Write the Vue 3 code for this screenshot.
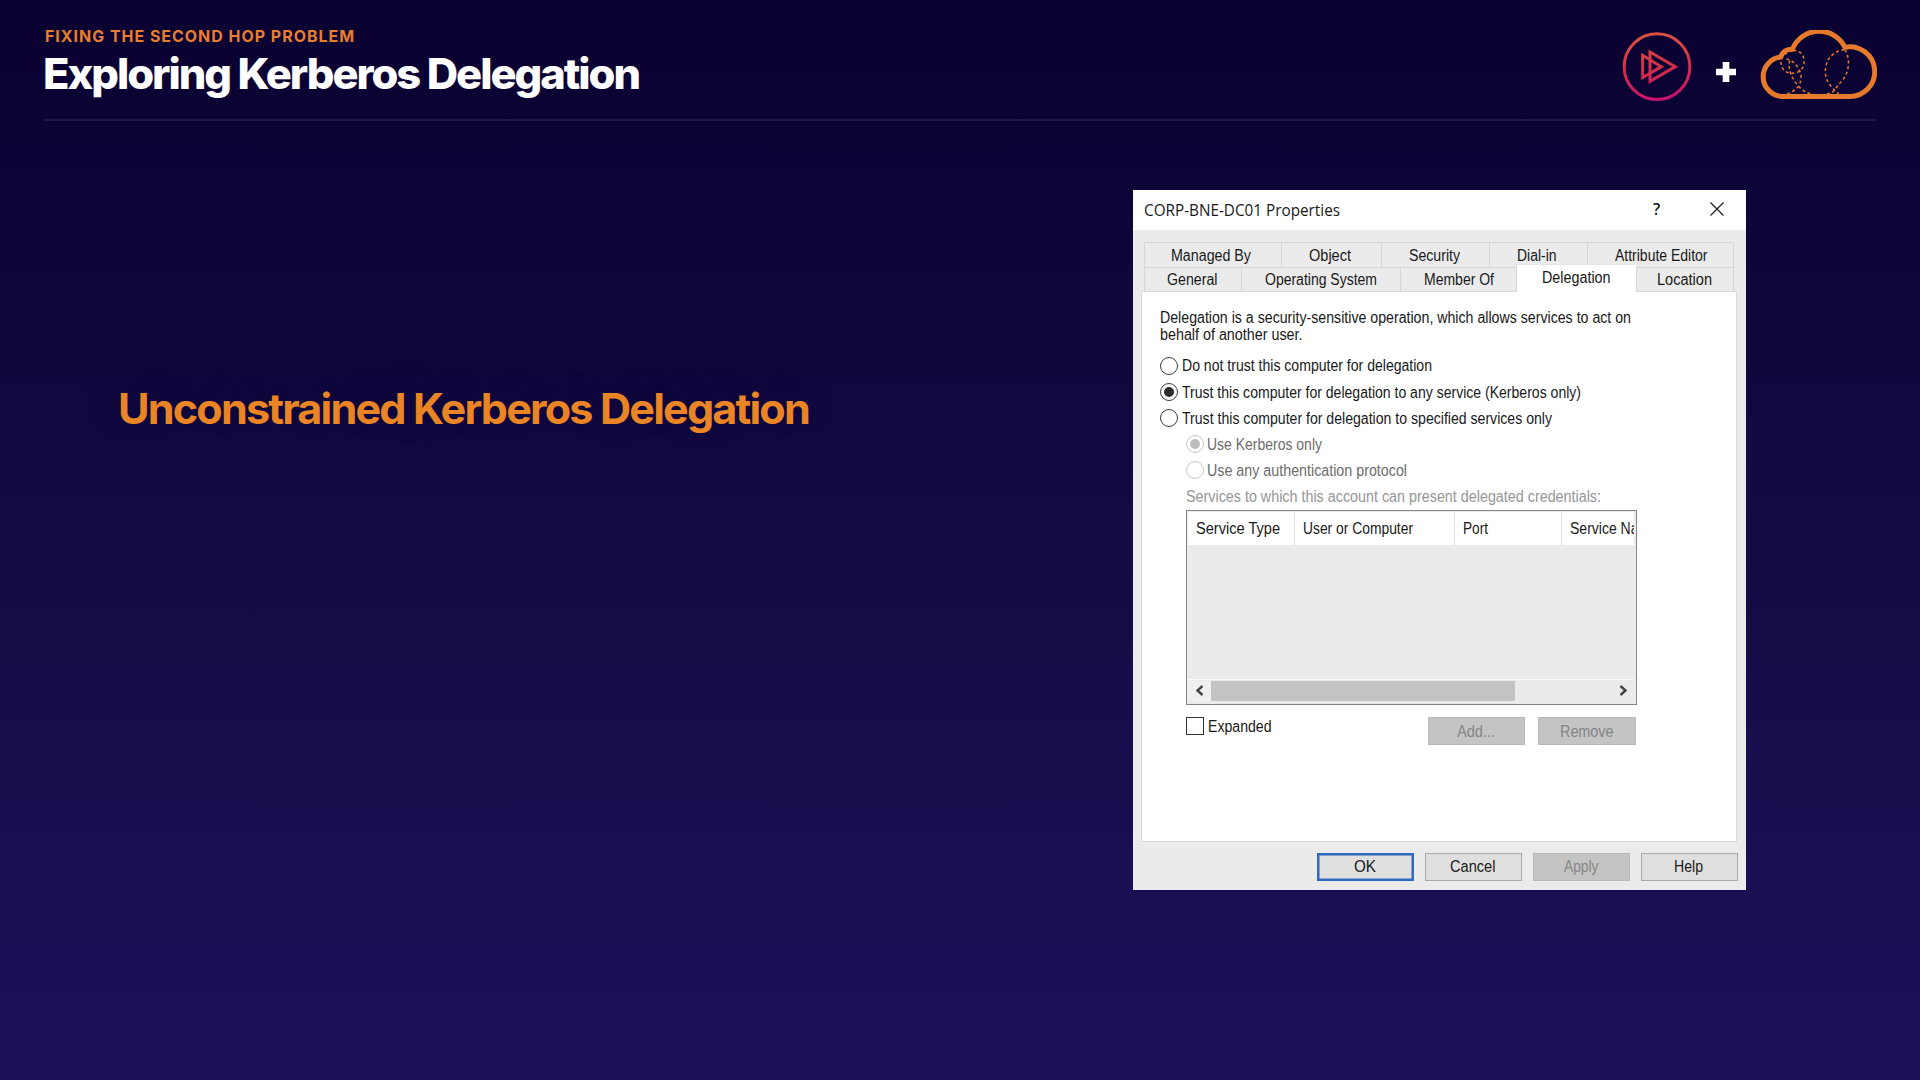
<script setup>
// Fits a label to its designed width by condensing the glyphs horizontally.
const vFit = {
  mounted(el, { value }) {
    const natural = el.getBoundingClientRect().width
    if (!natural) return
    el.style.transform = `scaleX(${value / natural})`
    el.style.marginRight = `${value - natural}px`
  },
}

const backTabs = [
  { label: 'Managed By', width: 137, text: 80, pad: 26 },
  { label: 'Object', width: 100, text: 42, pad: 26.5 },
  { label: 'Security', width: 108, text: 51, pad: 27 },
  { label: 'Dial-in', width: 97.5, text: 39.5, pad: 27 },
  { label: 'Attribute Editor', width: 147.5, text: 92.5, pad: 27.5 },
]
const frontTabs = [
  { label: 'General', width: 97, text: 50.5, pad: 21.5 },
  { label: 'Operating System', width: 158.5, text: 112, pad: 23 },
  { label: 'Member Of', width: 116, text: 70, pad: 23.5 },
  { label: 'Delegation', width: 120, text: 68.5, pad: 25, active: true },
  { label: 'Location', width: 98.5, text: 55, pad: 20.5 },
]
const radios = [
  { label: 'Do not trust this computer for delegation', text: 250 },
  { label: 'Trust this computer for delegation to any service (Kerberos only)', text: 399, on: true },
  { label: 'Trust this computer for delegation to specified services only', text: 370 },
  { label: 'Use Kerberos only', text: 115, on: true, sub: true },
  { label: 'Use any authentication protocol', text: 200, sub: true },
]
const columns = [
  { label: 'Service Type', width: 107, text: 84 },
  { label: 'User or Computer', width: 160, text: 110 },
  { label: 'Port', width: 107, text: 25 },
  { label: 'Service Name', width: 120, text: 88 },
]
const footer = [
  { label: 'OK', text: 22, kind: 'primary' },
  { label: 'Cancel', text: 45.5, kind: '' },
  { label: 'Apply', text: 34.5, kind: 'disabled' },
  { label: 'Help', text: 29, kind: '' },
]
</script>

<template>
  <div class="slide">
    <header class="head">
      <div class="titles">
        <div class="eyebrow"><span v-fit="310">FIXING THE SECOND HOP PROBLEM</span></div>
        <h1><span v-fit="596">Exploring Kerberos Delegation</span></h1>
      </div>
      <div class="brands">
        <svg class="play" viewBox="66 63 210 213" fill="none">
          <defs>
            <linearGradient id="brand" gradientUnits="userSpaceOnUse" x1="150" y1="66" x2="170" y2="274">
              <stop offset="0" stop-color="#dc5540" />
              <stop offset=".5" stop-color="#d03048" />
              <stop offset="1" stop-color="#c80f70" />
            </linearGradient>
          </defs>
          <g stroke="url(#brand)" stroke-width="9">
            <circle cx="171" cy="170" r="98.500" />
            <path d="M150 126V214L226 170Z" />
            <path d="M128 136V203L184 170Z" />
          </g>
        </svg>
        <svg class="plus" viewBox="0 0 60 60"><path d="M20 0H40V20H60V40H40V60H20V40H0V20H20Z" fill="#fff" /></svg>
        <svg class="cloud" viewBox="480 60 354 210" fill="none" stroke="#e67a2c">
          <path stroke-width="15" stroke-linejoin="round" d="M549 259.500A59.500 59.500 0 0 1 545 141C550 126 563 118 580 118A86.500 86.500 0 0 1 738 112A74.500 74.500 0 1 1 750 259.500Z" />
          <g stroke-width="4.500" stroke-dasharray="9 8">
            <path d="M580 122C557 128 544 143 546 162C550 184 570 193 590 189C609 184 617 166 615 148C613 132 600 120 580 122" />
            <path d="M562 147C588 152 609 182 606 207C603 232 585 246 560 253" />
            <path d="M572 151C566 178 577 203 598 228C611 243 624 250 644 253" />
            <path d="M736 119C694 124 677 158 679 190C682 216 696 231 719 251" />
            <path d="M738 119C754 146 751 182 733 207C721 223 713 229 707 240C701 248 692 251 678 253" />
          </g>
        </svg>
      </div>
    </header>

    <main>
      <div class="statement"><span v-fit="691">Unconstrained Kerberos Delegation</span></div>

      <section class="dialog">
        <div class="titlebar">
          <div class="caption"><span v-fit="196">CORP-BNE-DC01 Properties</span></div>
          <div class="help">?</div>
          <svg class="close" viewBox="0 0 14 14"><path d="M.5 .5L13.500 13.500M13.500 .5L.5 13.500" stroke="#222" stroke-width="1.300" /></svg>
        </div>

        <div class="tabs back">
          <div v-for="t in backTabs" :key="t.label" class="tab" :style="{ width: t.width + 'px', paddingLeft: t.pad + 'px' }">
            <span v-fit="t.text">{{ t.label }}</span>
          </div>
        </div>
        <div class="tabs front">
          <div v-for="t in frontTabs" :key="t.label" class="tab" :class="{ active: t.active }" :style="{ width: t.width + 'px', paddingLeft: t.pad + 'px' }">
            <span v-fit="t.text">{{ t.label }}</span>
          </div>
        </div>

        <div class="panel">
          <div class="note">
            <div><span v-fit="471">Delegation is a security-sensitive operation, which allows services to act on</span></div>
            <div><span v-fit="142.5">behalf of another user.</span></div>
          </div>
          <div class="radios">
            <div v-for="r in radios" :key="r.label" class="radio" :class="{ sub: r.sub }">
              <i :class="{ on: r.on }"></i><span v-fit="r.text">{{ r.label }}</span>
            </div>
          </div>
          <div class="listlabel"><span v-fit="415">Services to which this account can present delegated credentials:</span></div>
          <div class="list">
            <div class="cols">
              <div v-for="c in columns" :key="c.label" class="col" :style="{ width: c.width + 'px' }">
                <span v-fit="c.text">{{ c.label }}</span>
              </div>
            </div>
            <div class="scroll">
              <div class="arrow left"><svg viewBox="0 0 9 11"><path d="M7.500 1L2.500 5.500L7.500 10" fill="none" stroke="#444" stroke-width="2.400" /></svg></div>
              <div class="thumb"></div>
              <div class="arrow right"><svg viewBox="0 0 9 11"><path d="M1.500 1L6.500 5.500L1.500 10" fill="none" stroke="#444" stroke-width="2.400" /></svg></div>
            </div>
          </div>
          <div class="actions">
            <div class="check"><i></i><span v-fit="63.5">Expanded</span></div>
            <div class="btn disabled"><span v-fit="38">Add...</span></div>
            <div class="btn disabled"><span v-fit="53.5">Remove</span></div>
          </div>
        </div>

        <div class="footer">
          <div v-for="b in footer" :key="b.label" class="btn" :class="b.kind"><span v-fit="b.text">{{ b.label }}</span></div>
        </div>
      </section>
    </main>
  </div>
</template>

<style>
body {
  margin: 0;
  background: #0b0134;
}
</style>

<style scoped>
* {
  box-sizing: border-box;
}
.slide {
  width: 1920px;
  height: 1080px;
  overflow: hidden;
  display: flex;
  flex-direction: column;
  background: linear-gradient(180deg, #0a0131 0%, #130a43 50%, #1c125a 100%);
  font-family: "Inter", sans-serif;
}
span {
  display: inline-block;
  white-space: pre;
  transform-origin: 0 50%;
}
.head {
  flex: none;
  display: flex;
  justify-content: space-between;
  height: 121px;
  margin: 0 43px;
  border-bottom: 2px solid #1d164a;
}
.titles {
  padding-top: 24px;
}
.eyebrow {
  margin-left: 2px;
  font-size: 16px;
  line-height: 24px;
  font-weight: 700;
  letter-spacing: 1px;
  color: #e67e30;
}
h1 {
  margin: 0;
  font-size: 42.500px;
  line-height: 52px;
  font-weight: 800;
  letter-spacing: -2px;
  color: #fff;
}
.brands {
  display: flex;
  align-items: flex-start;
}
.play {
  width: 70px;
  height: 71px;
  margin-top: 31px;
}
.plus {
  width: 20px;
  height: 20px;
  margin: 62px 23px 0 24.500px;
}
.cloud {
  width: 118px;
  height: 70px;
  margin: 30px 0 0 0;
}
main {
  flex: 1;
  display: flex;
  align-items: flex-start;
}
.statement {
  width: 1015px;
  margin: 262px 0 0 118px;
  font-size: 42.500px;
  line-height: 52px;
  font-weight: 700;
  letter-spacing: -1.800px;
  color: #e98524;
}
.statement span {
  text-shadow: 0 -10px 80px rgba(8, 0, 38, .15);
}
.dialog {
  width: 613px;
  height: 700px;
  margin-top: 69px;
  display: flex;
  flex-direction: column;
  background: #ebebeb;
  font-family: "Liberation Sans", Arial, sans-serif;
  font-size: 16px;
  line-height: 18px;
  color: #191919;
}
.titlebar {
  display: flex;
  height: 40px;
  padding-left: 11px;
  background: #fff;
  font-family: "Open Sans", sans-serif;
  font-size: 16px;
  line-height: 40px;
}
.caption {
  width: 509px;
}
.help {
  width: 57px;
  line-height: 39px;
  font-weight: 600;
}
.close {
  width: 14px;
  height: 14px;
  margin-top: 12px;
}
.tabs {
  display: flex;
  margin-left: 11px;
}
.back {
  margin-top: 12px;
}
.tab {
  flex: none;
  height: 24.500px;
  padding-top: 4px;
  border-top: 1px solid #d6d6d6;
  border-left: 1px solid #d6d6d6;
}
.tab:last-child {
  border-right: 1px solid #d6d6d6;
}
.front .tab {
  height: 24px;
  padding-top: 3px;
}
.front .active {
  height: 28px;
  margin: -2.500px 0 -1.500px;
  padding-top: 3.500px;
  background: #fff;
  border-top-color: #e6e6e6;
  position: relative;
}
.panel {
  width: 596px;
  height: 551px;
  margin-left: 8px;
  padding-left: 18px;
  background: #fff;
  border: 1px solid #d9d9d9;
}
.note {
  margin-top: 17.500px;
  line-height: 17px;
}
.radios {
  margin-top: 9px;
}
.radio {
  display: flex;
  align-items: center;
  height: 26px;
}
.radio:first-child {
  height: 27px;
}
.radio span,
.check span {
  padding-top: 1px;
}
.radio i {
  display: flex;
  align-items: center;
  justify-content: center;
  width: 18px;
  height: 18px;
  margin-right: 3.500px;
  border: 1.500px solid #3c3c3c;
  border-radius: 50%;
}
.radio i.on::after {
  content: "";
  width: 10px;
  height: 10px;
  border-radius: 50%;
  background: #2d2d2d;
}
.radio.sub {
  padding-left: 25.500px;
  color: #6c6c6c;
}
.radio.sub i {
  border-color: #c6c6c6;
}
.radio.sub i.on::after {
  background: #bdbdbd;
}
.listlabel {
  margin: 5px 0 0 26px;
  color: #969696;
}
.list {
  width: 451px;
  height: 195px;
  margin: 4px 0 0 26px;
  display: flex;
  flex-direction: column;
  justify-content: space-between;
  border: 1.500px solid #858585;
  padding: 1px 2px 3px 1px;
  background: #ebebeb;
}
.cols {
  display: flex;
  height: 33px;
  overflow: hidden;
  background: #fff;
}
.col {
  flex: none;
  padding: 8px 0 0 7.500px;
  border-right: 1px solid #dedede;
}
.scroll {
  display: flex;
  align-items: center;
  height: 22px;
  border-top: 1.500px solid #f9f9f9;
}
.arrow {
  display: flex;
  align-items: center;
  height: 20px;
}
.arrow svg {
  width: 9px;
  height: 11px;
}
.left {
  width: 23px;
  padding-left: 7px;
  background: #f0f0f0;
}
.right {
  margin-left: auto;
  padding-right: 6px;
}
.thumb {
  width: 304px;
  height: 20px;
  background: #c3c3c3;
}
.actions {
  display: flex;
  margin: 12px 0 0 26px;
}
.check {
  display: flex;
  align-items: flex-start;
  width: 241.500px;
}
.check i {
  width: 18px;
  height: 18px;
  margin-right: 3.500px;
  border: 1.500px solid #333;
}
.btn {
  display: flex;
  align-items: center;
  justify-content: center;
  flex: none;
  width: 97.500px;
  height: 28px;
  padding: 1px 1px 0 0;
  background: #dfdfdf;
  border: 1.500px solid #a9a9a9;
}
.actions .btn + .btn {
  margin-left: 13px;
}
.btn.disabled {
  color: #858585;
  background: #c4c4c4;
  border-color: #b9b9b9;
}
.btn.primary {
  border: 2px solid #3069bd;
  box-shadow: inset 0 0 0 .5px #3069bd;
}
.footer {
  display: flex;
  justify-content: flex-end;
  gap: 10.500px;
  margin: 11px 8px 0 0;
}
</style>
